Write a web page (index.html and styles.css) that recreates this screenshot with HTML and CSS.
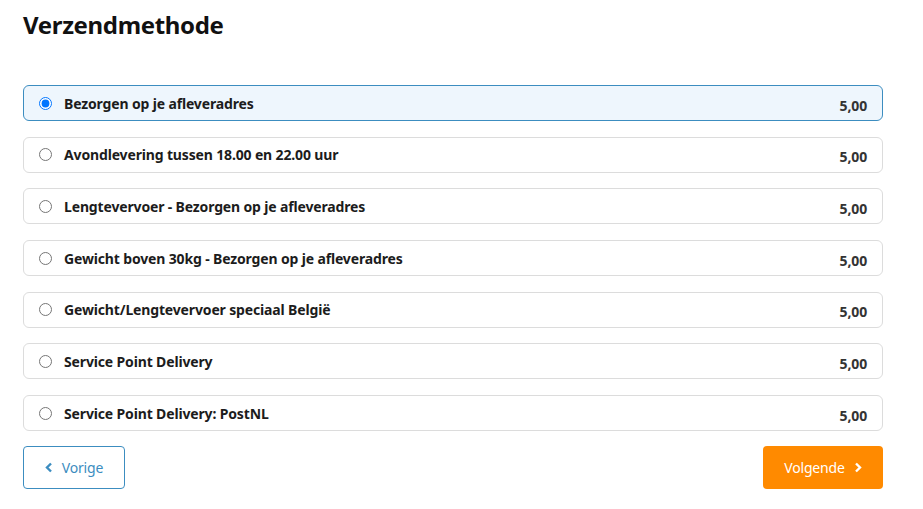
FILE: index.html
```html
<!DOCTYPE html>
<html lang="nl">
<head>
    <meta charset="UTF-8">
    <meta name="viewport" content="width=device-width, initial-scale=1.0">
    <title>Verzendmethode</title>
    <link rel="stylesheet" href="styles.css">
</head>
<body>
    <div class="checkout-step">
        <h2>Verzendmethode</h2>
        <div class="shipping-list">
            <label class="shipping-option selected">
                <input type="radio" name="shipping" checked>
                <span class="option-name">Bezorgen op je afleveradres</span>
                <span class="option-price">5,00</span>
            </label>
            <label class="shipping-option">
                <input type="radio" name="shipping">
                <span class="option-name">Avondlevering tussen 18.00 en 22.00 uur</span>
                <span class="option-price">5,00</span>
            </label>
            <label class="shipping-option">
                <input type="radio" name="shipping">
                <span class="option-name">Lengtevervoer - Bezorgen op je afleveradres</span>
                <span class="option-price">5,00</span>
            </label>
            <label class="shipping-option">
                <input type="radio" name="shipping">
                <span class="option-name">Gewicht boven 30kg - Bezorgen op je afleveradres</span>
                <span class="option-price">5,00</span>
            </label>
            <label class="shipping-option">
                <input type="radio" name="shipping">
                <span class="option-name">Gewicht/Lengtevervoer speciaal België</span>
                <span class="option-price">5,00</span>
            </label>
            <label class="shipping-option">
                <input type="radio" name="shipping">
                <span class="option-name">Service Point Delivery</span>
                <span class="option-price">5,00</span>
            </label>
            <label class="shipping-option">
                <input type="radio" name="shipping">
                <span class="option-name">Service Point Delivery: PostNL</span>
                <span class="option-price">5,00</span>
            </label>
        </div>
        <div class="step-buttons">
            <button class="btn btn-back">
                <svg width="8" height="11" viewBox="0 0 8 11"><path d="M6 1.5 2 5.5 6 9.5" fill="none" stroke="currentColor" stroke-width="2.4"/></svg>
                Vorige
            </button>
            <button class="btn btn-next">
                Volgende
                <svg width="8" height="11" viewBox="0 0 8 11"><path d="M2 1.5 6 5.5 2 9.5" fill="none" stroke="currentColor" stroke-width="2.4"/></svg>
            </button>
        </div>
    </div>
</body>
</html>
```

FILE: styles.css
```css
body {
    margin: 0;
    font-family: "Noto Sans", "Open Sans", sans-serif;
    color: #1c1c1c;
    background: #fff;
}

.checkout-step {
    width: 860px;
    padding: 8px 23px;
}

h2 {
    font-size: 24px;
    font-weight: 700;
    letter-spacing: -0.35px;
    margin: 0 0 44px;
    color: #111;
}

.shipping-list {
    display: flex;
    flex-direction: column;
    gap: 15.7px;
}

.shipping-option {
    display: flex;
    align-items: center;
    height: 34px;
    padding: 0 15px;
    border: 1px solid #dcdcdc;
    border-radius: 6px;
    font-size: 14px;
    font-weight: 700;
    letter-spacing: -0.15px;
    cursor: pointer;
}

.shipping-option.selected {
    background: #eef6fd;
    border-color: #3c8dc0;
}

.shipping-option input {
    margin: 0 12px 0 0;
    width: 13px;
    height: 13px;
}

.option-name {
    flex: 1;
}

.option-price {
    color: #333;
    padding-top: 4px;
}

.step-buttons {
    display: flex;
    justify-content: space-between;
    margin-top: 15px;
}

.btn {
    display: flex;
    align-items: center;
    justify-content: center;
    gap: 9px;
    height: 43px;
    border-radius: 4px;
    font-family: inherit;
    font-size: 14px;
    letter-spacing: -0.2px;
    cursor: pointer;
}

.btn-back {
    width: 102px;
    background: #fff;
    border: 1px solid #3c8dc0;
    color: #3c8dc0;
}

.btn-next {
    width: 120px;
    background: #ff8a00;
    border: none;
    color: #fff;
}
```
